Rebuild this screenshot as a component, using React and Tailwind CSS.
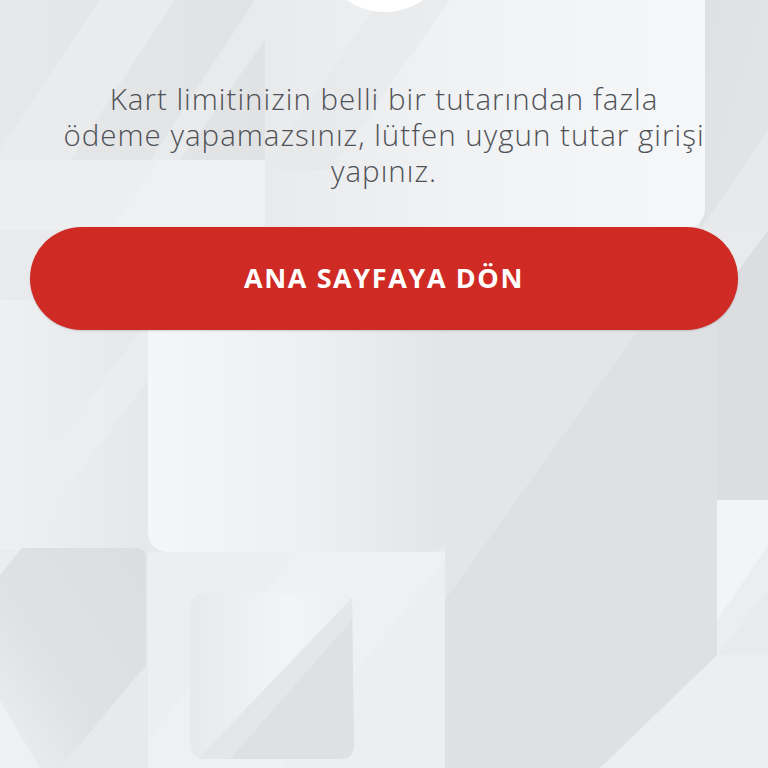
import React from "react"

const Backdrop = () => (
  <svg className="absolute inset-0 w-full h-full" viewBox="0 0 768 768" preserveAspectRatio="none">
    <defs>
      <linearGradient id="topLeft" x1="0" y1="0" x2="1" y2="0">
        <stop offset="0" stopColor="#e7e8ea" />
        <stop offset="1" stopColor="#e1e2e4" />
      </linearGradient>
      <linearGradient id="panelTop" x1="0" y1="0" x2="1" y2="0">
        <stop offset="0" stopColor="#e9eaec" />
        <stop offset="0.45" stopColor="#f1f2f4" />
        <stop offset="1" stopColor="#f6f7f8" />
      </linearGradient>
      <linearGradient id="panelMid" x1="0" y1="0" x2="1" y2="0">
        <stop offset="0" stopColor="#f5f6f7" />
        <stop offset="0.55" stopColor="#eeeff1" />
        <stop offset="1" stopColor="#e3e4e6" />
      </linearGradient>
      <linearGradient id="leftStrip" x1="0" y1="0" x2="1" y2="0">
        <stop offset="0" stopColor="#eff0f2" />
        <stop offset="1" stopColor="#e6e7e9" />
      </linearGradient>
      <linearGradient id="bl" x1="1" y1="0" x2="0" y2="1">
        <stop offset="0" stopColor="#dcdde0" />
        <stop offset="0.6" stopColor="#e0e1e3" />
        <stop offset="1" stopColor="#eeeff1" />
      </linearGradient>
      <linearGradient id="square" x1="0" y1="0" x2="1" y2="0">
        <stop offset="0" stopColor="#e8e9eb" />
        <stop offset="0.6" stopColor="#f3f4f5" />
        <stop offset="1" stopColor="#eeeff1" />
      </linearGradient>
      <linearGradient id="rightTop" x1="0" y1="0" x2="1" y2="1">
        <stop offset="0" stopColor="#dfe0e2" />
        <stop offset="1" stopColor="#e4e5e7" />
      </linearGradient>
    </defs>
    <rect width="768" height="768" fill="#e8e9eb" />

    {/* top left block */}
    <rect x="0" y="0" width="265" height="160" fill="url(#topLeft)" />
    <polygon points="0,150 100,0 175,0 70,160 0,160" fill="#eaebed" />
    <polygon points="150,160 255,0 265,0 265,40 180,160" fill="#e9eaec" />
    <rect x="0" y="160" width="265" height="70" fill="#eceef0" />
    <polygon points="110,230 160,160 265,160 265,230" fill="#eff0f2" />

    {/* right of top panel */}
    <rect x="700" y="0" width="68" height="230" fill="url(#rightTop)" />
    <polygon points="700,230 768,130 768,230" fill="#e8e9eb" />

    {/* top panel */}
    <rect x="265" y="-30" width="440" height="260" rx="22" fill="url(#panelTop)" />
    <polygon points="265,165 380,0 450,0 330,170 265,170" fill="#e6e7e9" opacity="0.55" />
    <circle cx="385" cy="-55" r="67" fill="#ffffff" />

    {/* band under the button */}
    <rect x="0" y="230" width="768" height="100" fill="#e9eaec" />

    {/* left strip */}
    <rect x="0" y="300" width="148" height="250" fill="url(#leftStrip)" />
    <polygon points="0,520 148,320 148,380 0,580" fill="#eceef0" opacity="0.6" />

    {/* right big grey */}
    <rect x="445" y="300" width="272" height="468" fill="#dfe0e3" />
    <polygon points="445,330 470,300 660,300 445,600" fill="#e4e5e7" />
    <polygon points="717,300 768,230 768,500 717,560" fill="#dcdde0" />
    <rect x="717" y="500" width="51" height="180" fill="#f3f4f6" />
    <polygon points="717,620 768,545 768,680 717,680" fill="#ecedef" />
    <polygon points="600,768 717,655 768,655 768,768" fill="#eceef0" />
    <polygon points="717,655 768,590 768,655" fill="#e9eaec" />

    {/* mid panel */}
    <rect x="148" y="290" width="300" height="262" rx="20" fill="url(#panelMid)" />

    {/* below mid panel */}
    <rect x="148" y="552" width="297" height="216" fill="#eceef0" />
    <polygon points="148,768 148,740 297,552 445,552 445,560 280,768" fill="#eff0f2" />

    {/* bottom left */}
    <path d="M0 575 L22 548 L136 548 Q146 548 146 558 L146 665 L60 768 L0 768 Z" fill="url(#bl)" />
    <polygon points="0,768 0,700 40,768" fill="#eff0f2" />

    {/* small square */}
    <rect x="190" y="593" width="164" height="166" rx="14" fill="url(#square)" />
    <path d="M352 598 L354 745 Q354 759 340 759 L198 759 Z" fill="#dfe0e3" />
    <polygon points="198,759 352,598 352,620 230,759" fill="#e7e8ea" opacity="0.7" />
  </svg>
)

export default function App() {
  return (
    <div className="relative w-full h-[768px] overflow-hidden bg-[#e8e9eb]">
      <Backdrop />
      <div className="relative flex flex-col items-center pt-[81px] px-[30px]">
        <p
          className="flex flex-col items-center text-center text-[29.5px] leading-[36px] font-light tracking-[1px] text-[#4f5156] whitespace-nowrap"
          style={{ fontFamily: '"Open Sans", "Liberation Sans", sans-serif' }}
        >
          <span>Kart limitinizin belli bir tutarından fazla</span>
          <span>ödeme yapamazsınız, lütfen uygun tutar girişi</span>
          <span>yapınız.</span>
        </p>
        <button
          className="mt-[38px] w-full h-[103px] rounded-full bg-[#cf2a24] text-white text-[27px] font-bold tracking-[1.6px] shadow-[0_1px_2px_rgba(0,0,0,0.15)]"
          style={{ fontFamily: '"Open Sans", "Liberation Sans", sans-serif' }}
        >
          ANA SAYFAYA DÖN
        </button>
      </div>
    </div>
  )
}
